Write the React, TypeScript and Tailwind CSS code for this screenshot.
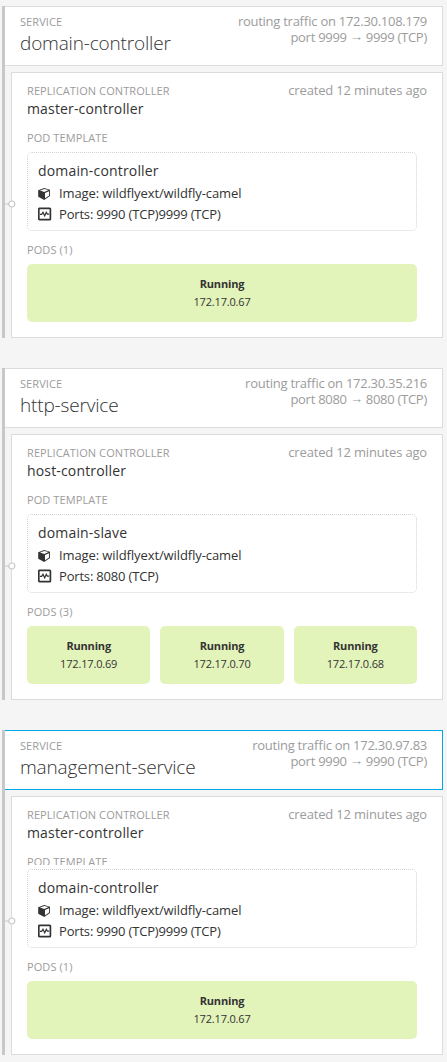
import React from "react";

type Pod = { status: string; ip: string };
type Service = {
  name: string;
  ip: string;
  port: string;
  controller: string;
  template: string;
  ports: string;
  pods: Pod[];
  active?: boolean;
  compact?: boolean;
};

const services: Service[] = [
  {
    name: "domain-controller",
    ip: "172.30.108.179",
    port: "9999",
    controller: "master-controller",
    template: "domain-controller",
    ports: "9990 (TCP)9999 (TCP)",
    pods: [{ status: "Running", ip: "172.17.0.67" }],
  },
  {
    name: "http-service",
    ip: "172.30.35.216",
    port: "8080",
    controller: "host-controller",
    template: "domain-slave",
    ports: "8080 (TCP)",
    pods: [
      { status: "Running", ip: "172.17.0.69" },
      { status: "Running", ip: "172.17.0.70" },
      { status: "Running", ip: "172.17.0.68" },
    ],
  },
  {
    name: "management-service",
    ip: "172.30.97.83",
    port: "9990",
    controller: "master-controller",
    template: "domain-controller",
    ports: "9990 (TCP)9999 (TCP)",
    pods: [{ status: "Running", ip: "172.17.0.67" }],
    active: true,
    compact: true,
  },
];

function CubeIcon() {
  return (
    <svg width="14" height="14" viewBox="0 0 14 14" className="block shrink-0">
      <path d="M6.2 1 L12 2.7 V9.1 L6.2 13 L0.2 9.8 V3.2 Z" fill="#333" />
      <path d="M2 3.5 L6.4 2 L10.6 3.1 L6.3 4.9 Z" fill="#fff" />
      <path d="M7 5.9 L11.1 4.2 V8.6 L7 11.3 Z" fill="#fff" />
    </svg>
  );
}

function PortIcon() {
  return (
    <svg width="14" height="14" viewBox="0 0 14 14" className="block shrink-0 -translate-y-px" fill="none" stroke="#333">
      <rect x="0.8" y="1.3" width="11.6" height="11.4" rx="0.8" strokeWidth="1.7" />
      <path d="M2 7.4 H3.7 L5 5.2 L6.7 8.8 L8.3 5.3 L9.3 7.1 H11.2" strokeWidth="1.2" />
    </svg>
  );
}

function Label({ children, className = "" }: { children: React.ReactNode; className?: string }) {
  return (
    <div className={`text-[11px] leading-4 tracking-[0.09px] text-[#9c9c9c] ${className}`}>{children}</div>
  );
}

function ServiceBlock({ s }: { s: Service }) {
  return (
    <section className="border-l-[3px] border-[#c8c8c8]">
      <header
        className={`flex h-[60px] justify-between border-y border-r bg-white pr-[15px] pl-[15px] ${
          s.active ? "border-[#00a8e1]" : "border-[#dcdcdc]"
        }`}
      >
        <div className="pt-[7px]">
          <Label>SERVICE</Label>
          <h2 className="mt-[3px] text-[19px] leading-5 font-light tracking-[-0.17px] text-[#333]">{s.name}</h2>
        </div>
        <div className="pt-1.5 text-right text-[13px] leading-4 tracking-[-0.27px] text-[#9c9c9c] [font-feature-settings:'liga'_1]">
          <div>routing traffic on {s.ip}</div>
          <div>
            port {s.port} <span className="relative -top-px">→</span> {s.port} (TCP)
          </div>
        </div>
      </header>
      <div className="mt-1.5 ml-1.5 border border-[#dcdcdc] bg-white pr-[15px] pb-[15px] pl-[15px]">
        <div className="flex justify-between pt-[9px]">
          <div className="pt-px">
            <Label>REPLICATION CONTROLLER</Label>
            <h3 className="text-[14px] leading-5 tracking-[0.16px] text-[#333]">{s.controller}</h3>
          </div>
          <div className="text-[13px] leading-4 tracking-[-0.17px] text-[#9c9c9c]">created 12 minutes ago</div>
        </div>
        <div className={s.compact ? "mt-[11px] mb-1 h-[11px] overflow-hidden" : "mt-[11px] mb-[6px] h-4"}>
          <Label>POD TEMPLATE</Label>
        </div>
        <div className="relative mr-2.5 h-[79px] rounded-[5px] border border-dotted border-[#d4d4d4] pt-2 pl-2.5 text-[#333]">
          <svg width="12" height="8" viewBox="0 0 12 8" className="absolute top-[47px] -left-[24px]" fill="none">
            <path d="M0 4 H5" stroke="#c8c8c8" />
            <circle cx="7.8" cy="4" r="3" fill="#fff" stroke="#c8c8c8" strokeWidth="1.2" />
          </svg>
          <div className="text-[14px] leading-5 tracking-[0.17px]">{s.template}</div>
          <div className="mt-[2px] flex h-[21px] items-center gap-[7px] text-[13px] leading-[21px] tracking-[-0.1px]">
            <CubeIcon />
            <span className="[font-feature-settings:'liga'_1]">Image: wildflyext/wildfly-camel</span>
          </div>
          <div className="flex h-[21px] items-center gap-[7px] text-[13px] leading-[21px] tracking-[-0.18px]">
            <PortIcon />
            <span>Ports: {s.ports}</span>
          </div>
        </div>
        <Label className="mt-[11px]">PODS ({s.pods.length})</Label>
        <div className="mt-1.5 mr-2.5 flex gap-2.5">
          {s.pods.map((p) => (
            <div
              key={p.ip}
              className="h-[58px] flex-1 rounded-[5px] bg-[#e3f4bb] pt-[11px] text-center text-[11px] leading-[18px] tracking-[-0.17px] text-[#333]"
            >
              <div className="font-bold">{p.status}</div>
              <div>{p.ip}</div>
            </div>
          ))}
        </div>
      </div>
    </section>
  );
}

export default function App() {
  return (
    <main className="flex h-[1062px] w-[447px] flex-col gap-[30px] bg-[#f5f5f5] pt-1.5 pr-1 pl-0.5 font-['Open_Sans',sans-serif]">
      {services.map((s) => (
        <ServiceBlock key={s.name} s={s} />
      ))}
    </main>
  );
}
